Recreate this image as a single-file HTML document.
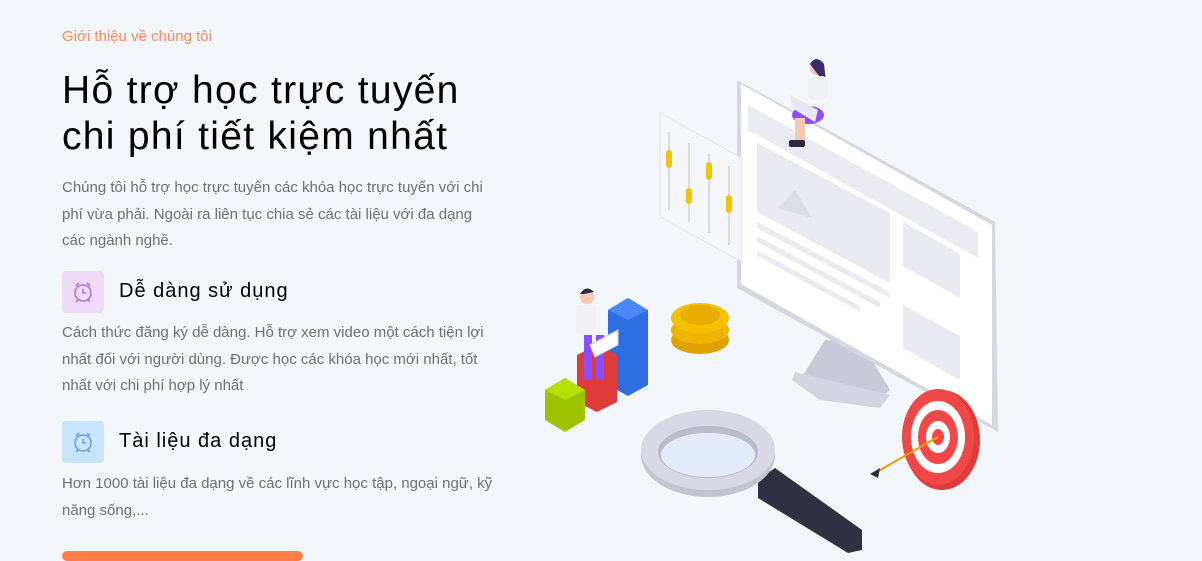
<!DOCTYPE html>
<html><head><meta charset="utf-8"><style>
*{margin:0;padding:0;box-sizing:border-box}
body{width:1202px;height:553px;overflow:hidden;background:#f3f6fa;font-family:"Liberation Sans","Noto Sans CJK SC",sans-serif;position:relative}
.t{position:absolute;left:62px}
.sub{top:28px;color:#ff8a5b;font-size:15px}
h1{position:absolute;left:62px;top:68px;font-size:39px;font-weight:400;line-height:46px;color:#000;letter-spacing:1.3px}
p{position:absolute;left:62px;width:442px;color:#6c6f75;font-size:15px;line-height:26.5px}
.ic{position:absolute;left:62px;width:42px;height:42px;border-radius:4px}
h3{position:absolute;left:119px;font-size:20px;font-weight:400;color:#000;letter-spacing:1px}
.btn{position:absolute;left:62px;top:551px;width:241px;height:10px;background:#ff7e45;border-radius:6px}
</style></head><body>
<div class="t sub">Giới thiệu về chúng tôi</div>
<h1>Hỗ trợ học trực tuyến<br>chi phí tiết kiệm nhất</h1>
<p style="top:175px;width:432px">Chúng tôi hỗ trợ học trực tuyến các khóa học trực tuyến với chi phí vừa phải. Ngoài ra liên tục chia sẻ các tài liệu với đa dạng các ngành nghề.</p>
<div class="ic" style="top:271px;background:#efdaf7"><svg width="42" height="42" viewBox="0 0 42 42" fill="none" stroke="#b774d9" stroke-width="1.6"><circle cx="21" cy="22" r="8"/><path d="M21 18v4h3M14 15l3-3M28 15l-3-3M16 29l-2 2M26 29l2 2"/></svg></div>
<h3 style="top:280px">Dễ dàng sử dụng</h3>
<p style="top:320px">Cách thức đăng ký dễ dàng. Hỗ trợ xem video một cách tiện lợi nhất đối với người dùng. Được học các khóa học mới nhất, tốt nhất với chi phí hợp lý nhất</p>
<div class="ic" style="top:421px;background:#c8e5fc"><svg width="42" height="42" viewBox="0 0 42 42" fill="none" stroke="#5fa8e8" stroke-width="1.6"><circle cx="21" cy="22" r="8"/><path d="M21 18v4h3M14 15l3-3M28 15l-3-3M16 29l-2 2M26 29l2 2"/></svg></div>
<h3 style="top:430px">Tài liệu đa dạng</h3>
<p style="top:471px">Hơn 1000 tài liệu đa dạng về các lĩnh vực học tập, ngoại ngữ, kỹ năng sống,...</p>
<div class="btn"></div>
<svg style="position:absolute;left:0;top:0" width="1202" height="553" viewBox="0 0 1202 553">
<polygon points="825,340 860,340 890,390 870,405 800,380" fill="#c8cad8"/>
<polygon points="795,372 890,395 880,408 820,400 792,380" fill="#d3d5e2"/>
<polygon points="737,80 995,222 998,432 737,288" fill="#d5d7e3"/>
<polygon points="741,84 992,225 992,425 741,284" fill="#fff"/>
<polygon points="748,105 978,232 978,258 748,130" fill="#ebecf3"/>
<polygon points="757,143 890,213 890,283 757,212" fill="#e9eaf2"/>
<polygon points="903,222 960,254 960,298 903,266" fill="#eaebf2"/>
<polygon points="903,305 960,336 960,380 903,348" fill="#eaebf2"/>
<polygon points="757,222 890,292 890,298 757,228" fill="#ebecf3"/>
<polygon points="757,236 880,302 880,308 757,242" fill="#ebecf3"/>
<polygon points="757,250 860,306 860,312 757,256" fill="#ebecf3"/>
<polygon points="778,208 795,190 812,218" fill="#dcdde6"/>
<polygon points="660,113 742,158 742,262 660,217" fill="#f7f8fb" stroke="#e1e3ea" opacity="0.9"/>
<g stroke="#cfd2dc" stroke-width="1.5"><line x1="669" y1="132" x2="669" y2="210"/><line x1="689" y1="143" x2="689" y2="222"/><line x1="709" y1="154" x2="709" y2="233"/><line x1="729" y1="166" x2="729" y2="245"/></g>
<g fill="#f5c400"><rect x="666" y="150" width="6" height="18" rx="3"/><rect x="686" y="188" width="6" height="16" rx="3"/><rect x="706" y="162" width="6" height="18" rx="3"/><rect x="726" y="195" width="6" height="18" rx="3"/></g>
<circle cx="817" cy="68" r="7" fill="#f6c9b1"/><path d="M810 64 q6-10 14 0 l2 18 -4-2z" fill="#3b2a6a"/>
<rect x="808" y="76" width="20" height="24" rx="6" fill="#f1f1f4"/>
<ellipse cx="808" cy="115" rx="16" ry="9" fill="#8b4dff"/><rect x="795" y="118" width="10" height="22" fill="#f6c9b1"/>
<polygon points="790,95 818,110 815,122 792,108" fill="#e8e9f0"/>
<rect x="789" y="140" width="16" height="7" rx="2" fill="#2c2744"/>
<polygon points="608,310 628,298 648,310 648,385 628,396 608,385" fill="#2f6ee0"/><polygon points="608,310 628,298 648,310 628,320" fill="#4a88f7"/>
<polygon points="577,355 597,345 617,355 617,402 597,412 577,402" fill="#df3c3c"/>
<polygon points="545,390 565,378 585,390 585,420 565,432 545,420" fill="#9ec400"/><polygon points="545,390 565,378 585,390 565,400" fill="#b5e000"/>
<circle cx="587" cy="297" r="7" fill="#f6c9b1"/><path d="M580 294 q6-10 14-2 l-10 2z" fill="#2c2744"/>
<rect x="576" y="305" width="20" height="30" rx="5" fill="#f1f1f4"/>
<rect x="596" y="335" width="8" height="45" fill="#8b4dff"/><rect x="584" y="335" width="8" height="45" fill="#8b4dff"/>
<polygon points="590,345 618,330 618,345 595,357" fill="#fff" stroke="#ccd"/>
<ellipse cx="700" cy="340" rx="29" ry="14" fill="#e0a000"/><ellipse cx="700" cy="330" rx="29" ry="14" fill="#f0b400"/><ellipse cx="700" cy="318" rx="29" ry="15" fill="#f5c000"/><ellipse cx="700" cy="315" rx="20" ry="10" fill="#e8ad00"/>
<polygon points="758,480 775,468 862,530 862,550 848,553 758,498" fill="#2d3142"/>
<ellipse cx="708" cy="455" rx="67" ry="42" fill="#c3c5d3"/>
<ellipse cx="708" cy="450" rx="67" ry="40" fill="#d8d9e4"/>
<ellipse cx="708" cy="452" rx="50" ry="26" fill="#b9bccb"/>
<ellipse cx="708" cy="455" rx="47" ry="22" fill="#e3ebfa"/>
<ellipse cx="942" cy="440" rx="38" ry="50" fill="#e03a3a"/>
<ellipse cx="938" cy="437" rx="36" ry="48" fill="#f04848"/>
<ellipse cx="938" cy="437" rx="27" ry="36" fill="#fff"/>
<ellipse cx="938" cy="437" rx="20" ry="27" fill="#f04848"/>
<ellipse cx="938" cy="437" rx="12" ry="16" fill="#fff"/>
<ellipse cx="938" cy="437" rx="6" ry="8" fill="#f04848"/>
<line x1="875" y1="473" x2="938" y2="437" stroke="#e8a000" stroke-width="2"/>
<polygon points="870,474 880,468 878,478" fill="#2c2744"/>
</svg>
</body></html>
